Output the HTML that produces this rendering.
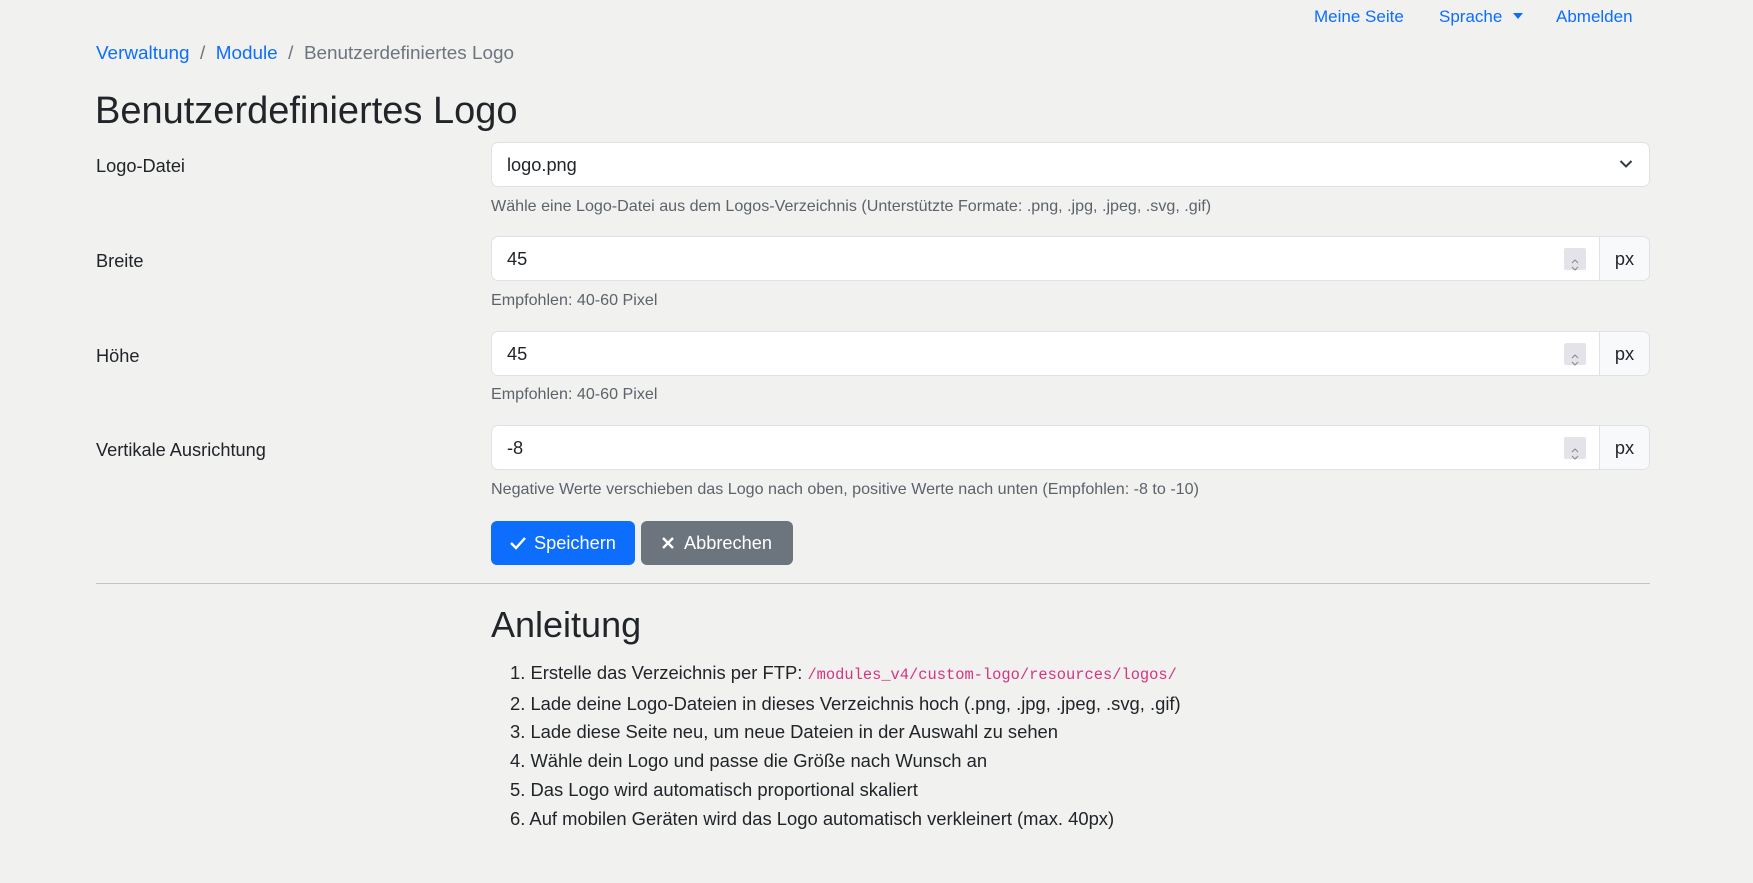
<!DOCTYPE html>
<html><head><meta charset="utf-8"><style>
*{box-sizing:border-box;margin:0;padding:0}
body{width:1753px;height:883px;overflow:hidden;background:#f1f1f0;font-family:"Liberation Sans",sans-serif;color:#212529;font-size:18px;position:relative}
.a{position:absolute;white-space:nowrap}
.blue{color:#0d6efd}
.lbl{left:96px;font-size:18.2px}
.ctl{position:absolute;left:491px;width:1159px;height:45px;background:#fff;border:1px solid #dee2e6;border-radius:7px;font-size:18.2px;padding:0 15px;line-height:45px}
.grp .in{position:absolute;left:0;top:-1px;width:1109px;height:45px;border:1px solid #dee2e6;border-radius:7px 0 0 7px;background:#fff;padding:0 15px;line-height:45px;font-size:18.2px}
.grp .px{position:absolute;left:1108px;top:-1px;width:51px;height:45px;border:1px solid #dee2e6;border-radius:0 7px 7px 0;background:#f8f9fa;text-align:center;line-height:45px;font-size:18.2px}
.spin{position:absolute;right:13px;top:11px;width:22px;height:22px;background:#e4e3ea;border-radius:2px}
.help{left:491px;font-size:16.1px;color:#5c636a}
.btn{position:absolute;top:521px;height:44px;border-radius:6px;color:#fff;font-size:18.2px;line-height:45px;padding-left:18px}
ol{position:absolute;left:491px;top:659px;list-style:none;font-size:18.4px;line-height:28.7px}
ol li{padding-left:19px}
code{font-family:"Liberation Mono",monospace;color:#d63384;font-size:15.4px}
</style></head><body>
<div class="a blue" style="left:1314px;top:7px;font-size:17px">Meine Seite</div>
<div class="a blue" style="left:1439px;top:7px;font-size:17px">Sprache <span style="display:inline-block;width:0;height:0;border-left:5px solid transparent;border-right:5px solid transparent;border-top:6px solid #0d6efd;vertical-align:3px;margin-left:6px"></span></div>
<div class="a blue" style="left:1556px;top:7px;font-size:17px">Abmelden</div>

<div class="a" style="left:96px;top:43px;font-size:18.9px"><span class="blue">Verwaltung</span> <span style="color:#6c757d">&nbsp;/&nbsp;</span> <span class="blue">Module</span> <span style="color:#6c757d">&nbsp;/&nbsp;</span> <span style="color:#6c757d">Benutzerdefiniertes Logo</span></div>

<div class="a" style="left:95px;top:90px;font-size:38px;font-weight:500">Benutzerdefiniertes Logo</div>

<div class="a lbl" style="top:156px">Logo-Datei</div>
<div class="ctl" style="top:142px">logo.png
<svg style="position:absolute;right:16px;top:16px" width="14" height="10" viewBox="0 0 14 10"><path d="M1.5 2l5.5 5.5 5.5-5.5" stroke="#343a40" stroke-width="2" fill="none"/></svg></div>
<div class="a help" style="top:197px">Wähle eine Logo-Datei aus dem Logos-Verzeichnis (Unterstützte Formate: .png, .jpg, .jpeg, .svg, .gif)</div>

<div class="a lbl" style="top:251px">Breite</div>
<div class="grp" style="position:absolute;left:491px;top:237px;width:1159px;height:45px"><div class="in">45<div class="spin"><svg width="22" height="22"><path d="M8 9l3-3 3 3M8 13l3 3 3-3" stroke="#888" fill="none"/></svg></div></div><div class="px">px</div></div>
<div class="a help" style="top:291px">Empfohlen: 40-60 Pixel</div>

<div class="a lbl" style="top:346px">Höhe</div>
<div class="grp" style="position:absolute;left:491px;top:332px;width:1159px;height:45px"><div class="in">45<div class="spin"><svg width="22" height="22"><path d="M8 9l3-3 3 3M8 13l3 3 3-3" stroke="#888" fill="none"/></svg></div></div><div class="px">px</div></div>
<div class="a help" style="top:385px">Empfohlen: 40-60 Pixel</div>

<div class="a lbl" style="top:440px">Vertikale Ausrichtung</div>
<div class="grp" style="position:absolute;left:491px;top:426px;width:1159px;height:45px"><div class="in">-8<div class="spin"><svg width="22" height="22"><path d="M8 9l3-3 3 3M8 13l3 3 3-3" stroke="#888" fill="none"/></svg></div></div><div class="px">px</div></div>
<div class="a help" style="top:480px">Negative Werte verschieben das Logo nach oben, positive Werte nach unten (Empfohlen: -8 to -10)</div>

<div class="btn" style="left:491px;width:144px;background:#0d6efd"><svg width="18" height="14" viewBox="0 0 18 14" style="vertical-align:-1px;margin-right:7px"><path d="M2 7l5 5 9-10" stroke="#fff" stroke-width="2.4" fill="none"/></svg>Speichern</div>
<div class="btn" style="left:641px;width:152px;background:#6c757d;padding-left:20px"><svg width="14" height="14" viewBox="0 0 14 14" style="vertical-align:-1px;margin-right:9px"><path d="M2 2l10 10M12 2L2 12" stroke="#fff" stroke-width="2.4"/></svg>Abbrechen</div>

<div class="a" style="left:96px;top:583px;width:1554px;height:1px;background:#c4c4c4"></div>

<div class="a" style="left:491px;top:604px;font-size:36px;font-weight:500">Anleitung</div>
<ol>
<li>1. Erstelle das Verzeichnis per FTP: <code>/modules_v4/custom-logo/resources/logos/</code></li>
<li>2. Lade deine Logo-Dateien in dieses Verzeichnis hoch (.png, .jpg, .jpeg, .svg, .gif)</li>
<li>3. Lade diese Seite neu, um neue Dateien in der Auswahl zu sehen</li>
<li>4. Wähle dein Logo und passe die Größe nach Wunsch an</li>
<li>5. Das Logo wird automatisch proportional skaliert</li>
<li>6. Auf mobilen Geräten wird das Logo automatisch verkleinert (max. 40px)</li>
</ol>
</body></html>
